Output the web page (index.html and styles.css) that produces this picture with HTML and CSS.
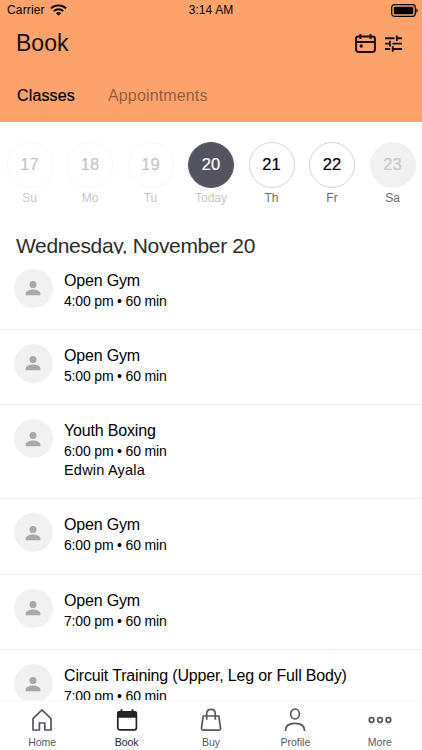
FILE: index.html
```html
<!DOCTYPE html>
<html lang="en">
<head>
    <meta charset="UTF-8">
    <meta name="viewport" content="width=device-width, initial-scale=1.0">
    <title>Book</title>
    <link rel="stylesheet" href="styles.css">
</head>
<body>
    <svg class="sprite" aria-hidden="true">
        <symbol id="person" viewBox="0 0 16 16">
            <circle cx="8" cy="4.4" r="3.5"/>
            <path d="M.7 15.2v-1.8c0-2.6 4.5-3.9 7.3-3.9s7.3 1.3 7.3 3.9v1.8z"/>
        </symbol>
    </svg>
    <div class="app">
        <header class="header">
            <div class="status">
                <div class="carrier">
                    <span>Carrier</span>
                    <svg class="wifi" viewBox="0 0 17 12">
                        <path d="M1 4.4a10.8 10.8 0 0 1 15 0M3.7 7.1a7 7 0 0 1 9.6 0" fill="none" stroke="#000" stroke-width="1.9"/>
                        <path d="M8.5 11.8 5.9 9.2a3.8 3.8 0 0 1 5.2 0z"/>
                    </svg>
                </div>
                <span class="clock">3:14 AM</span>
                <svg class="battery" viewBox="0 0 27 13">
                    <rect x=".7" y=".7" width="23.6" height="11.6" rx="2.8" fill="none" stroke="#000" stroke-width="1.2"/>
                    <rect x="2.8" y="2.8" width="19.4" height="7.4" rx=".8"/>
                    <path d="M25.4 4.4c1.8.6 1.8 3.6 0 4.2z"/>
                </svg>
            </div>
            <div class="title-bar">
                <h1>Book</h1>
                <div class="actions">
                    <svg class="icon-calendar" viewBox="0 0 20 18" fill="none" stroke="#1a0f09" stroke-width="1.9">
                        <rect x="1" y="2.3" width="18" height="14.7" rx="2.2"/>
                        <path d="M1 7.5h18M5.2 0v4.8M14.8 0v4.8"/>
                        <circle cx="5.9" cy="11.4" r="1.6" fill="#1a0f09" stroke="none"/>
                    </svg>
                    <svg class="icon-filter" viewBox="0 0 17 17" fill="none" stroke="#1a0f09" stroke-width="1.9">
                        <path d="M0 3.3h9.5M11.8 3.3H17M11.8.5v5.6M0 8.6h5M7.5 8.6H17M5 5.8v5.6M0 14h5.2M7.8 14H17M7.8 11.2v5.6"/>
                    </svg>
                </div>
            </div>
            <nav class="sections">
                <span class="active">Classes</span>
                <span>Appointments</span>
            </nav>
        </header>

        <section class="dates">
            <div class="day past"><b>17</b><span>Su</span></div>
            <div class="day past"><b>18</b><span>Mo</span></div>
            <div class="day past"><b>19</b><span>Tu</span></div>
            <div class="day today"><b>20</b><span>Today</span></div>
            <div class="day"><b>21</b><span>Th</span></div>
            <div class="day"><b>22</b><span>Fr</span></div>
            <div class="day empty"><b>23</b><span>Sa</span></div>
        </section>

        <main class="schedule">
            <h2>Wednesday, November 20</h2>
            <article class="class-row">
                <div class="avatar"><svg><use href="#person"/></svg></div>
                <div class="info"><h3>Open Gym</h3><p>4:00 pm • 60 min</p></div>
            </article>
            <article class="class-row">
                <div class="avatar"><svg><use href="#person"/></svg></div>
                <div class="info"><h3>Open Gym</h3><p>5:00 pm • 60 min</p></div>
            </article>
            <article class="class-row">
                <div class="avatar"><svg><use href="#person"/></svg></div>
                <div class="info"><h3>Youth Boxing</h3><p>6:00 pm • 60 min</p><p class="teacher">Edwin Ayala</p></div>
            </article>
            <article class="class-row">
                <div class="avatar"><svg><use href="#person"/></svg></div>
                <div class="info"><h3>Open Gym</h3><p>6:00 pm • 60 min</p></div>
            </article>
            <article class="class-row">
                <div class="avatar"><svg><use href="#person"/></svg></div>
                <div class="info"><h3>Open Gym</h3><p>7:00 pm • 60 min</p></div>
            </article>
            <article class="class-row">
                <div class="avatar"><svg><use href="#person"/></svg></div>
                <div class="info"><h3>Circuit Training (Upper, Leg or Full Body)</h3><p>7:00 pm • 60 min</p></div>
            </article>
        </main>

        <nav class="tabs">
            <div class="tab">
                <svg viewBox="0 0 24 24"><path d="M3 22V10.6L12 2l9 8.6V22h-6.2v-7H9.4v7z"/></svg>
                <span>Home</span>
            </div>
            <div class="tab selected">
                <svg viewBox="0 0 24 24">
                    <rect x="2.8" y="4" width="18.6" height="17.8" rx="2"/>
                    <path class="solid" d="M2 9.8V5c0-1.200.8-2 2-2h1.500V1.300h2V3h9V1.300h2V3H20c1.200 0 2 .8 2 2v4.800z"/>
                </svg>
                <span>Book</span>
            </div>
            <div class="tab">
                <svg viewBox="0 0 24 24"><path d="M4.200 8h15.600l1.700 12c.2 1.300-.5 2.200-1.800 2.200H4.300c-1.300 0-2-.9-1.800-2.200zM7.700 11.800V6c0-2.800 1.800-4.600 4.300-4.600s4.300 1.800 4.300 4.600v5.800"/></svg>
                <span>Buy</span>
            </div>
            <div class="tab">
                <svg viewBox="0 0 24 24"><ellipse cx="12" cy="6" rx="4.400" ry="5"/><path d="M2.400 23c0-4.800 3.500-7.600 9.600-7.600s9.600 2.800 9.600 7.600"/></svg>
                <span>Profile</span>
            </div>
            <div class="tab">
                <svg viewBox="0 0 24 24"><circle cx="3.600" cy="12" r="2.300"/><circle cx="12" cy="12" r="2.300"/><circle cx="20.400" cy="12" r="2.300"/></svg>
                <span>More</span>
            </div>
        </nav>
    </div>
</body>
</html>
```
FILE: styles.css
```css
* {
    box-sizing: border-box;
}
body {
    margin: 0;
    font-family: "Liberation Sans", Arial, sans-serif;
    color: #111;
    background: #fff;
}
h1, h2, h3, p {
    margin: 0;
    font-weight: normal;
}
svg {
    display: block;
    flex: none;
}
.sprite {
    display: none;
}
.app {
    display: flex;
    flex-direction: column;
    width: 422px;
    height: 750px;
    overflow: hidden;
}
.header {
    flex: none;
    height: 122px;
    background: #fca36b;
}
.status {
    display: grid;
    grid-template-columns: 1fr auto 1fr;
    align-items: center;
    height: 20px;
    padding: 0 4px 0 7px;
    font-size: 12px;
    color: #000;
}
.carrier {
    display: flex;
    align-items: center;
    gap: 5px;
    letter-spacing: 0.15px;
}
.clock {
    margin-right: 3px;
    letter-spacing: 0.1px;
}
.wifi {
    width: 17px;
    height: 12px;
}
.battery {
    width: 27px;
    height: 13px;
    justify-self: end;
}
.title-bar {
    display: flex;
    justify-content: space-between;
    align-items: center;
    height: 46px;
    padding: 0 20px 0 16px;
}
h1 {
    font-size: 23px;
    line-height: 44px;
}
.actions {
    display: flex;
    align-items: center;
    gap: 9px;
}
.icon-calendar {
    width: 21px;
    height: 19px;
}
.icon-filter {
    width: 17px;
    height: 17px;
}
.sections {
    display: flex;
    gap: 33px;
    padding: 20px 17px 0;
    font-size: 16px;
    line-height: 20px;
    letter-spacing: 0.15px;
    color: rgba(0, 0, 0, 0.45);
}
.sections .active {
    color: #000;
    -webkit-text-stroke: 0.2px #000;
}
.dates {
    display: flex;
    flex: none;
    justify-content: center;
    height: 111px;
    padding-top: 20px;
}
.day {
    display: flex;
    flex: none;
    flex-direction: column;
    align-items: center;
    width: 60.5px;
    font-size: 12px;
    line-height: 16px;
    color: #6b6b6b;
}
.day b {
    width: 46px;
    height: 46px;
    margin-bottom: 2px;
    border: 1px solid #d4d4d4;
    border-radius: 50%;
    font-size: 16.5px;
    font-weight: normal;
    line-height: 43px;
    text-align: center;
    color: #000;
    -webkit-text-stroke: 0.2px;
}
.past, .today {
    color: #c6c6c6;
}
.past b {
    border-color: #f5f5f5;
    color: #c4c4c4;
}
.today b {
    border-color: #53545f;
    background: #53545f;
    color: #fff;
}
.empty b {
    border-color: #f1f1f1;
    background: #f1f1f1;
    color: #c8c8c8;
}
.schedule {
    flex: 1;
    min-height: 0;
    overflow: hidden;
}
h2 {
    height: 21px;
    margin-bottom: 0.6px;
    padding-left: 16px;
    overflow: hidden;
    font-size: 21px;
    line-height: 26px;
    letter-spacing: -0.35px;
    color: #2c2c2c;
}
.class-row {
    display: flex;
    gap: 11.5px;
    min-height: 75.4px;
    padding: 14px 14px 0 13.5px;
    border-bottom: 1px solid #f0f0f0;
}
.avatar {
    display: flex;
    flex: none;
    align-items: center;
    justify-content: center;
    width: 39px;
    height: 39px;
    border-radius: 50%;
    background: #f1f1f1;
}
.avatar svg {
    width: 16px;
    height: 16px;
    fill: #a8a8a8;
}
.info {
    padding: 2px 0 18px;
    color: #000;
}
h3 {
    font-size: 16px;
    line-height: 20px;
    letter-spacing: -0.17px;
}
.info p {
    font-size: 14px;
    line-height: 20px;
    letter-spacing: -0.17px;
}
.info .teacher {
    padding-bottom: 1px;
    font-size: 14.5px;
    line-height: 18px;
    letter-spacing: 0.2px;
}
.tabs {
    display: flex;
    flex: none;
    height: 50px;
    border-top: 1px solid #f3f3f3;
    background: #fff;
}
.tab {
    display: flex;
    flex: 1;
    flex-direction: column;
    align-items: center;
    padding-top: 7px;
    font-size: 10.5px;
    line-height: 14px;
    color: #55565f;
}
.tab svg {
    width: 24px;
    height: 24px;
    margin-bottom: 3px;
    fill: none;
    stroke: #55565f;
    stroke-width: 1.7;
}
.selected {
    color: #222328;
}
.selected svg {
    stroke: #222328;
}
.tab .solid {
    fill: #222328;
    stroke: none;
}
```
